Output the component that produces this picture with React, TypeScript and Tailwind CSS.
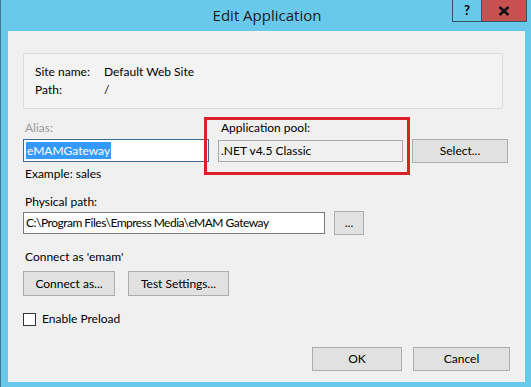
import React from "react";

const font = { fontFamily: 'Lato, "Open Sans", sans-serif' };

function Btn({ label, className }: { label: string; className: string }) {
  return (
    <div
      className={`flex items-center justify-center bg-[#e1e1e1] border border-[#adadad] text-[12px] text-black ${className}`}
    >
      {label}
    </div>
  );
}

export default function App() {
  return (
    <div
      className="relative w-[531px] h-[387px] bg-[#69c9ea] border-l border-[#3d7791] overflow-hidden"
      style={font}
    >
      {/* title bar */}
      <div
        className="h-[31px] flex items-center justify-center text-[15px] text-[#1b1b1b] pl-[2px]"
        style={{ fontFamily: '"Open Sans", sans-serif' }}
      >
        Edit Application
      </div>
      <div className="absolute top-0 left-[451px] flex">
        <div className="w-[30px] h-[22px] border border-[#2f5566] border-t-0 flex items-center justify-center text-[13px] font-bold text-black">
          ?
        </div>
        <div className="w-[45px] h-[22px] bg-[#c75050] border border-l-0 border-t-0 border-[#2f5566] flex items-center justify-center">
          <svg width="12" height="10" viewBox="0 0 12 10">
            <path d="M1.5 1 L10.5 9 M10.5 1 L1.5 9" stroke="#111" strokeWidth="2.6" />
          </svg>
        </div>
      </div>

      {/* client area */}
      <div className="ml-[7px] w-[517px] h-[351px] bg-[#f0f0f0] text-[12px] text-black flex flex-col pl-[15px]">
        <div className="mt-[22px] w-[480px] h-[56px] rounded-[2px] border border-[#dcdcdc] bg-[#f3f3f3] pt-[9px] pl-[11px]">
          <div className="flex h-[18px] items-center">
            <span className="w-[69px]">Site name:</span>
            <span>Default Web Site</span>
          </div>
          <div className="flex h-[18px] items-center">
            <span className="w-[69px]">Path:</span>
            <span>/</span>
          </div>
        </div>

        <div className="mt-[11px] flex items-start">
          <div className="w-[186px] flex flex-col">
            <div className="h-[16px] leading-[16px] pl-[2px] text-[#9a9a9a]">Alias:</div>
            <div className="mt-[3px] h-[23px] border border-[#3c6a92] bg-white flex items-center pl-[2px]">
              <span className="bg-[#3399ff] text-white leading-[17px] px-[1px]">eMAMGateway</span>
            </div>
            <div className="mt-[4px] h-[16px] leading-[16px] pl-[2px]">Example: sales</div>
          </div>

          <div className="relative ml-[9px] w-[185px] flex flex-col">
            <div className="h-[16px] leading-[16px] pl-[3px]">Application pool:</div>
            <div className="mt-[4px] h-[22px] border border-[#a8a8a8] bg-[#f0f0f0] flex items-center pl-[2px]">
              .NET v4.5 Classic
            </div>
            <div className="absolute -left-[14px] -right-[7px] -top-[3px] -bottom-[13px] border-[3px] border-[#df1f26]" />
          </div>

          <Btn label="Select..." className="ml-[9px] mt-[19px] w-[96px] h-[24px]" />
        </div>

        <div className="mt-[12px] h-[16px] leading-[16px] pl-[2px]">Physical path:</div>
        <div className="mt-[1px] flex items-center">
          <div className="w-[302px] h-[22px] border border-[#7a7a7a] bg-white flex items-center pl-[2px] tracking-[-0.5px]">
            C:\Program Files\Empress Media\eMAM Gateway
          </div>
          <Btn label="..." className="ml-[9px] w-[30px] h-[24px] border-[#707070] text-[10px]" />
        </div>

        <div className="mt-[14px] h-[16px] leading-[16px] pl-[2px]">Connect as 'emam'</div>
        <div className="mt-[6px] flex">
          <Btn label="Connect as..." className="w-[92px] h-[25px] border-[#707070]" />
          <Btn label="Test Settings..." className="ml-[13px] w-[101px] h-[25px] border-[#707070]" />
        </div>

        <div className="mt-[14px] flex items-center">
          <div className="w-[13px] h-[13px] border border-[#333] bg-white" />
          <span className="ml-[6px]">Enable Preload</span>
        </div>

        <div className="mt-[19px] flex pl-[289px]">
          <Btn label="OK" className="w-[90px] h-[24px] border-[#3c7fb1]" />
          <Btn label="Cancel" className="ml-[11px] w-[97px] h-[24px] border-[#707070]" />
        </div>
      </div>
    </div>
  );
}
